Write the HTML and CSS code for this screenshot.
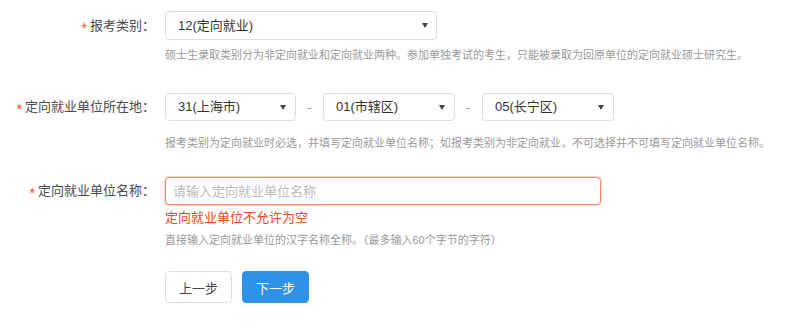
FILE: index.html
```html
<!DOCTYPE html>
<html lang="zh-CN">
<head>
    <meta charset="UTF-8">
    <title>报考信息</title>
    <link rel="stylesheet" href="styles.css">
</head>
<body>
    <div class="apply-form">
        <div class="form-row row-type">
            <label class="form-label"><span class="required">*</span>报考类别：</label>
            <div class="form-field">
                <div class="select select-wide">12(定向就业)</div>
                <p class="field-tip tip-type">硕士生录取类别分为非定向就业和定向就业两种。参加单独考试的考生，只能被录取为回原单位的定向就业硕士研究生。</p>
            </div>
        </div>

        <div class="form-row row-area">
            <label class="form-label"><span class="required">*</span>定向就业单位所在地：</label>
            <div class="form-field">
                <div class="select-group">
                    <div class="select select-small">31(上海市)</div>
                    <span class="dash">-</span>
                    <div class="select select-small">01(市辖区)</div>
                    <span class="dash">-</span>
                    <div class="select select-small">05(长宁区)</div>
                </div>
                <p class="field-tip tip-area">报考类别为定向就业时必选，并填写定向就业单位名称；如报考类别为非定向就业，不可选择并不可填写定向就业单位名称。</p>
            </div>
        </div>

        <div class="form-row row-unit">
            <label class="form-label"><span class="required">*</span>定向就业单位名称：</label>
            <div class="form-field">
                <input type="text" class="text-input has-error" placeholder="请输入定向就业单位名称">
                <p class="field-error">定向就业单位不允许为空</p>
                <p class="field-tip tip-unit">直接输入定向就业单位的汉字名称全称。（最多输入60个字节的字符）</p>
            </div>
        </div>

        <div class="form-actions">
            <button class="btn btn-default">上一步</button>
            <button class="btn btn-primary">下一步</button>
        </div>
    </div>
</body>
</html>
```

FILE: styles.css
```css
:root {
    --text-main: #4a4a4a;
    --text-tip: #999;
    --border: #dcdee2;
    --danger: #f2471c;
    --danger-border: #f38a6c;
    --primary: #2f92ea;
    --radius: 4px;
}

* {
    margin: 0;
    padding: 0;
    box-sizing: border-box;
}

body {
    background-color: #fff;
    color: var(--text-main);
    font-family: "Liberation Sans", "Noto Sans CJK SC", sans-serif;
    font-size: 13px;
}

.apply-form {
    padding-top: 11px;
}

.form-row {
    display: flex;
    align-items: flex-start;
}

.row-area {
    margin-top: 30px;
}

.row-unit {
    margin-top: 26px;
}

.form-label {
    width: 165px;
    flex-shrink: 0;
    padding-right: 10px;
    text-align: right;
    height: 29px;
    line-height: 29px;
    color: var(--text-main);
    white-space: nowrap;
}

.row-area .form-label,
.row-unit .form-label {
    height: 28px;
    line-height: 28px;
}

.required {
    display: inline-block;
    color: var(--danger);
    font-size: 14px;
    margin-right: 3px;
    vertical-align: -3px;
}

.form-field {
    display: flex;
    flex-direction: column;
}

.select {
    position: relative;
    height: 28px;
    line-height: 26px;
    padding-left: 12px;
    border: 1px solid var(--border);
    border-radius: var(--radius);
    color: #333;
    background-color: #fff;
    white-space: nowrap;
}

.select::after {
    content: "";
    position: absolute;
    right: 9px;
    top: 11px;
    border: 3px solid transparent;
    border-top: 5px solid #444;
    border-bottom: 0;
}

.select-wide {
    width: 272px;
    height: 29px;
    line-height: 27px;
}

.select-wide::after {
    right: 8px;
}

.select-group {
    display: flex;
    align-items: center;
}

.select-small {
    width: 132px;
}

.select-small:first-child {
    width: 131px;
}

.dash {
    width: 27px;
    text-align: center;
    color: var(--text-tip);
}

.text-input {
    width: 436px;
    height: 28px;
    padding: 0 7px;
    border: 1px solid var(--border);
    border-radius: var(--radius);
    font-family: inherit;
    font-size: 13px;
    color: #333;
    outline: none;
}

.text-input::placeholder {
    color: #bbb;
}

.text-input.has-error {
    border-color: var(--danger-border);
    box-shadow: 0 0 0 1px rgba(243, 138, 108, 0.35);
}

.field-tip {
    font-size: 11px;
    line-height: 16px;
    color: var(--text-tip);
    white-space: nowrap;
}

.tip-type {
    margin-top: 7px;
}

.tip-area {
    margin-top: 14px;
}

.tip-unit {
    margin-top: 5px;
}

.field-error {
    margin-top: 4px;
    font-size: 13px;
    line-height: 18px;
    color: var(--danger);
}

.form-actions {
    display: flex;
    gap: 10px;
    margin-top: 23px;
    padding-left: 165px;
}

.btn {
    width: 67px;
    height: 32px;
    border-radius: var(--radius);
    font-family: inherit;
    font-size: 13px;
    cursor: pointer;
}

.btn-default {
    background-color: #fff;
    border: 1px solid var(--border);
    color: #444;
}

.btn-primary {
    background-color: var(--primary);
    border: 1px solid var(--primary);
    color: #fff;
}
```
